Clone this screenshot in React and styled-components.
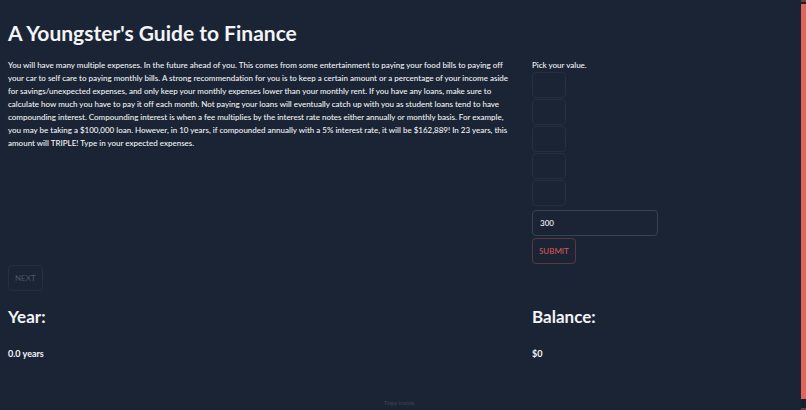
import { useState } from "react";
import styled, { createGlobalStyle } from "styled-components";

const INTRO = [
    "You will have many multiple expenses. In the future ahead of you. This comes from some entertainment to paying your food bills to paying off",
    "your car to self care to paying monthly bills. A strong recommendation for you is to keep a certain amount or a percentage of your income aside",
    "for savings/unexpected expenses, and only keep your monthly expenses lower than your monthly rent. If you have any loans, make sure to",
    "calculate how much you have to pay it off each month. Not paying your loans will eventually catch up with you as student loans tend to have",
    "compounding interest. Compounding interest is when a fee multiplies by the interest rate notes either annually or monthly basis. For example,",
    "you may be taking a $100,000 loan. However, in 10 years, if compounded annually with a 5% interest rate, it will be $162,889! In 23 years, this",
    "amount will TRIPLE! Type in your expected expenses.",
].join("\n");

const choices = [1, 2, 3, 4, 5];

export default function App() {
    const [amount, setAmount] = useState("300");

    return (
        <>
            <GlobalStyle />
            <Shell>
                <Page>
                    <Title>A Youngster's Guide to Finance</Title>
                    <Columns>
                        <Text>{INTRO}</Text>
                        <Picker>
                            <Text>Pick your value.</Text>
                            {choices.map((choice) => (
                                <ChoiceButton key={choice} aria-label={`Choice ${choice}`} disabled />
                            ))}
                            <AmountInput
                                aria-label="Amount"
                                value={amount}
                                onChange={(e) => setAmount(e.target.value)}
                            />
                            <SubmitButton>SUBMIT</SubmitButton>
                        </Picker>
                    </Columns>
                    <NextButton disabled>NEXT</NextButton>
                    <Results>
                        <div>
                            <Heading>Year:</Heading>
                            <Value>0.0 years</Value>
                        </div>
                        <div>
                            <Heading>Balance:</Heading>
                            <Value>$0</Value>
                        </div>
                    </Results>
                    <Footer>Taipy inside</Footer>
                </Page>
                <Track>
                    <TrackEnd />
                    <Thumb />
                    <TrackEnd $tall />
                </Track>
            </Shell>
        </>
    )
}


const GlobalStyle = createGlobalStyle`
  * {
    box-sizing: border-box;
  }
  body {
    margin: 0;
    background: #1b2434;
    color: #f2f4f7;
    font-family: Lato, "Liberation Sans", sans-serif;
    font-variant-ligatures: none;
  }
`;

const Shell = styled.div`
  display: flex;
  min-height: 100vh;
`;

const Page = styled.main`
  display: flex;
  flex-direction: column;
  align-items: flex-start;
  flex: 1;
  padding: 15px 11px 0 8px;
`;

const Title = styled.h1`
  margin: 0 0 9px;
  font-size: 21px;
  line-height: 35px;
  font-weight: 700;
`;

const Columns = styled.section`
  display: grid;
  grid-template-columns: 2fr 1fr;
  column-gap: 8px;
  width: 100%;
`;

const Results = styled(Columns)`
  margin-top: 12px;
`;

const Text = styled.p`
  margin: 0;
  font-size: 8px;
  line-height: 13px;
  font-weight: 500;
  white-space: pre-line;
`;

const Picker = styled.div`
  display: flex;
  flex-direction: column;
  align-items: flex-start;
`;

const Button = styled.button`
  height: 26px;
  margin: 0;
  padding: 0 6px;
  border: 1px solid #272f3f;
  border-radius: 4px;
  background: transparent;
  color: #4e5562;
  font-family: inherit;
  font-size: 8px;
  line-height: 14px;
`;

const ChoiceButton = styled(Button)`
  width: 34px;
  margin-bottom: 1px;
`;

const AmountInput = styled.input`
  width: 126px;
  height: 26px;
  margin: 3px 0 2px;
  padding: 0 7px;
  border: 1px solid #3a4250;
  border-radius: 4px;
  background: transparent;
  color: #f2f4f7;
  font-family: inherit;
  font-size: 8px;
  font-weight: 500;
`;

const SubmitButton = styled(Button)`
  border-color: #593842;
  color: #df5856;
`;

const NextButton = styled(Button)`
  margin-top: 1px;
`;

const Heading = styled.h2`
  margin: 0 0 14px;
  font-size: 17px;
  line-height: 28px;
  font-weight: 700;
`;

const Value = styled.h3`
  margin: 0;
  font-size: 9px;
  line-height: 18px;
  font-weight: 700;
`;

const Footer = styled.footer`
  align-self: center;
  margin-top: auto;
  font-size: 6px;
  line-height: 14px;
  color: #3d4552;
`;

const Track = styled.div`
  display: flex;
  flex-direction: column;
  width: 5px;
  background: #1b2434;
`;

const TrackEnd = styled.div`
  height: ${(props) => (props.$tall ? "11px" : "4px")};
  background: #1a1f2d;
  border-${(props) => (props.$tall ? "bottom" : "top")}: 2px solid #6b3d46;
`;

const Thumb = styled.div`
  flex: 1;
  background: #df655b;
`;
